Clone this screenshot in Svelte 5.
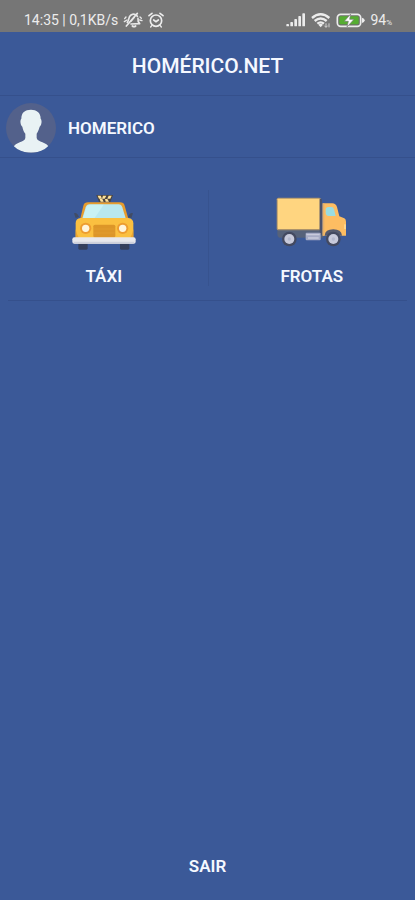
<script>
  let user = 'HOMERICO';
  let selected = '';

  const items = [
    { id: 'taxi', label: 'TÁXI' },
    { id: 'frotas', label: 'FROTAS' }
  ];
</script>

<div class="app">
  <div class="status">
    <div class="status-side">
      <span>14:35 | 0,1KB/s</span>
      <svg width="20" height="16" viewBox="0 0 60 48" aria-hidden="true">
        <g fill="none" stroke="#e9e9e9" stroke-width="5" stroke-linecap="round" stroke-linejoin="round">
          <path d="M13 31 C19 25 15 15 24 9 C31 5 39 7 43 13" />
          <path d="M45 19 C44 26 45 30 50 35 L24 36" />
          <path d="M28 42 Q33 46 38 42" />
          <path d="M10 42 L43 4" />
          <path d="M5 20 L9 15 M4 29 L12 24 M51 15 L55 19 M50 24 L57 26" stroke-width="4" />
          <path d="M24 28 L34 16" stroke-width="4" />
        </g>
      </svg>
      <svg width="16" height="16" viewBox="0 0 48 48" aria-hidden="true">
        <g fill="none" stroke="#ededed" stroke-width="5" stroke-linecap="round">
          <circle cx="24" cy="26" r="17" />
          <path d="M3 11 L12 4 M45 11 L36 4" />
          <path d="M17 24 L24 29 L31 24" />
          <path d="M11 41 L8 45 M37 41 L40 45" stroke-width="4" />
        </g>
      </svg>
    </div>
    <div class="status-side">
      <svg width="20" height="14" viewBox="0 0 60 42" fill="#ececec" aria-hidden="true">
        <rect x="1" y="33" width="8" height="7" rx="2" />
        <rect x="13" y="27" width="8" height="13" rx="2" />
        <rect x="25" y="18" width="8" height="22" rx="2" />
        <rect x="37" y="9" width="8" height="31" rx="2" />
        <rect x="49" y="1" width="8" height="39" rx="2" />
      </svg>
      <svg width="20" height="15" viewBox="0 0 60 45" aria-hidden="true">
        <g fill="none" stroke="#ececec" stroke-width="7">
          <path d="M3 15 Q29 -7 55 15" />
          <path d="M11 24 Q29 9 47 24" />
          <path d="M19 32 Q29 24 39 32" />
        </g>
        <path d="M22 35 Q29 30 36 35 L29 43 Z" fill="#ececec" />
        <path d="M45 31 V43 M40 38 L45 43 L50 38 M54 43 V31" fill="none" stroke="#d2d2d2" stroke-width="3" />
      </svg>
      <svg width="29" height="15" viewBox="0 0 87 45" aria-hidden="true">
        <rect x="4" y="4" width="70" height="36" rx="10" fill="#6d706b" stroke="#ececec" stroke-width="5" />
        <path d="M78 14 Q86 16 86 22 Q86 28 78 30 Z" fill="#ececec" />
        <rect x="10" y="10" width="58" height="24" rx="4" fill="#55ad31" />
        <path d="M44 3 L25 25 H37 L33 42 L54 19 H41 Z" fill="#fff" stroke="#777" stroke-width="2" />
      </svg>
      <span>94<small>%</small></span>
    </div>
  </div>

  <header>
    <h1>HOMÉRICO.NET</h1>
  </header>

  <div class="user">
    <svg width="50" height="50" viewBox="0 0 150 150" role="img" aria-label="Foto">
      <defs>
        <clipPath id="avatar"><circle cx="75" cy="75" r="75" /></clipPath>
      </defs>
      <circle cx="75" cy="75" r="75" fill="#53618b" />
      <path
        clip-path="url(#avatar)"
        fill="#e9f2f4"
        d="M75 20 C91 20 104 28 104 47 C108 51 108 65 101 71 C98 83 94 88 92 92 V105 C94 118 124 117 129 134 C111 153 39 153 22 134 C27 117 57 118 58 105 V92 C54 87 51 81 49 71 C42 65 42 51 46 47 C46 28 57 20 75 20 Z"
      />
    </svg>
    <span>{user}</span>
  </div>

  <nav class="menu">
    {#each items as item}
      <button class="item" on:click={() => (selected = item.id)}>
        <span class="icon">
          {#if item.id === 'taxi'}
            <svg width="64" height="57" viewBox="36 40 192 171" aria-hidden="true">
              <rect x="55" y="180" width="28" height="27" rx="4" fill="#343f5c" />
              <rect x="180" y="180" width="28" height="27" rx="4" fill="#343f5c" />
              <path d="M42 98 Q51 94 57 109 L47 112 Z M219 98 Q210 94 204 109 L214 112 Z" fill="#414c65" />
              <path d="M109 43 H159 L151 64 H117 Z" fill="#4b4541" />
              <path d="M113 45 H122 L126 54 H117 Z M129 45 H139 L134 54 H126 Z M146 45 H155 L151 54 H142 Z M119 55 H127 L131 63 H122 Z M135 55 H142 L147 63 H137 Z" fill="#ffe29a" />
              <path d="M60 118 L70 75 Q73 65 84 65 H180 Q191 65 194 75 L206 118 Z" fill="#e79c2d" />
              <path d="M67 113 L77 80 Q80 71 88 71 H176 Q184 71 187 80 L197 113 Z" fill="#b9e8ef" />
              <path d="M92 72 H131 L104 112 H69 L79 80 Q82 72 92 72 Z" fill="#c9f2f4" />
              <path d="M47 176 V128 Q47 113 62 112 H205 Q220 114 220 128 V176 Z" fill="#fbc040" />
              <path d="M47 145 V173 H57 Q50 161 47 145 Z M220 145 V173 H210 Q217 161 220 145 Z" fill="#eda52f" />
              <rect x="100" y="132" width="66" height="39" rx="5" fill="#dd9628" />
              <path d="M102 145 H164 M102 157 H164" stroke="#e19c2e" stroke-width="3" />
              <circle cx="77" cy="143" r="17" fill="#ed9d31" />
              <circle cx="77" cy="143" r="11" fill="#fff5dc" />
              <circle cx="188" cy="143" r="17" fill="#ed9d31" />
              <circle cx="188" cy="143" r="11" fill="#fff5dc" />
              <rect x="37" y="170" width="190" height="19" rx="6" fill="#e8e8ec" />
              <path d="M40 183 H224 Q222 189 216 189 H46 Q41 189 40 183 Z" fill="#ced1dc" />
            </svg>
          {:else}
            <svg width="71" height="50" viewBox="32 50 213 150" aria-hidden="true">
              <path d="M36 146 H174 V172 H44 Q36 171 36 160 Z" fill="#56627a" />
              <rect x="34" y="52" width="133" height="98" rx="5" fill="#ac936b" />
              <rect x="37" y="55" width="126" height="91" rx="2" fill="#ffd580" />
              <rect x="163" y="56" width="7" height="107" fill="#4b526b" />
              <path d="M172 69 H201 Q211 69 215 80 L222 108 L237 114 Q242 117 242 124 V166 H172 Z" fill="#fdbd62" />
              <path d="M172 69 H177 V166 H172 Z" fill="#e6b06a" />
              <path d="M181 89 Q181 80 189 80 H199 Q204 80 206 87 L211 107 H190 Q181 106 181 97 Z" fill="#9bdde1" />
              <path d="M236 132 H242 V146 H236 Z" fill="#ffd58c" />
              <path d="M178 166 Q179 147 204 147 Q228 147 230 166 Z" fill="#555a6e" />
              <rect x="121" y="157" width="45" height="23" rx="3" fill="#a6abc5" />
              <path d="M123 163 H163 M128 173 H160" stroke="#c9cbdc" stroke-width="4" />
              <circle cx="72" cy="176" r="22" fill="#434960" />
              <circle cx="72" cy="176" r="15" fill="#c8cadb" />
              <circle cx="72" cy="176" r="5" fill="#b4b8cd" />
              <circle cx="204" cy="176" r="22" fill="#434960" />
              <circle cx="204" cy="176" r="15" fill="#c8cadb" />
              <circle cx="204" cy="176" r="5" fill="#b4b8cd" />
            </svg>
          {/if}
        </span>
        <span>{item.label}</span>
      </button>
    {/each}
  </nav>
  <hr />

  <footer>
    <button on:click={() => (selected = '')}>SAIR</button>
  </footer>
</div>

<style>
  :global(body) {
    margin: 0;
    background: #3b5998;
  }

  .app {
    display: flex;
    flex-direction: column;
    min-height: 100vh;
    background: #3b5998;
    color: #f5f8ff;
    font-family: Roboto, "Liberation Sans", sans-serif;
    font-size: 17px;
    font-weight: 600;
  }

  .status {
    display: flex;
    justify-content: space-between;
    align-items: center;
    height: 32px;
    padding: 8px 23px 0 24px;
    box-sizing: border-box;
    background: #767676;
    color: #ececec;
    font-size: 14px;
    font-weight: 400;
  }

  .status-side {
    display: flex;
    align-items: center;
    gap: 5px;
  }

  .status small {
    font-size: 8px;
  }

  header {
    display: flex;
    align-items: center;
    justify-content: center;
    height: 64px;
    padding-top: 4px;
    box-sizing: border-box;
    border-bottom: 1px solid #35508c;
  }

  h1 {
    margin: 0;
    font-size: 21px;
    font-weight: 500;
  }

  .user {
    display: flex;
    align-items: center;
    gap: 12px;
    height: 62px;
    padding: 2px 6px 0;
    box-sizing: border-box;
    border-bottom: 1px solid #35508c;
  }

  .menu {
    display: grid;
    grid-template-columns: 1fr 1fr;
    margin-top: 32px;
  }

  button {
    padding: 0;
    border: none;
    background: none;
    color: inherit;
    font: inherit;
    cursor: pointer;
  }

  .item {
    display: flex;
    flex-direction: column;
    align-items: center;
    gap: 12px;
    height: 96px;
  }

  .item + .item {
    border-left: 1px solid #37538f;
  }

  .icon {
    display: flex;
    align-items: center;
    height: 64px;
  }

  hr {
    margin: 14px 8px 0;
    border: none;
    border-top: 1px solid #35508c;
  }

  footer {
    display: flex;
    justify-content: center;
    margin-top: auto;
    padding-bottom: 14px;
  }

  footer button {
    padding: 8px 16px;
    line-height: 24px;
  }
</style>
